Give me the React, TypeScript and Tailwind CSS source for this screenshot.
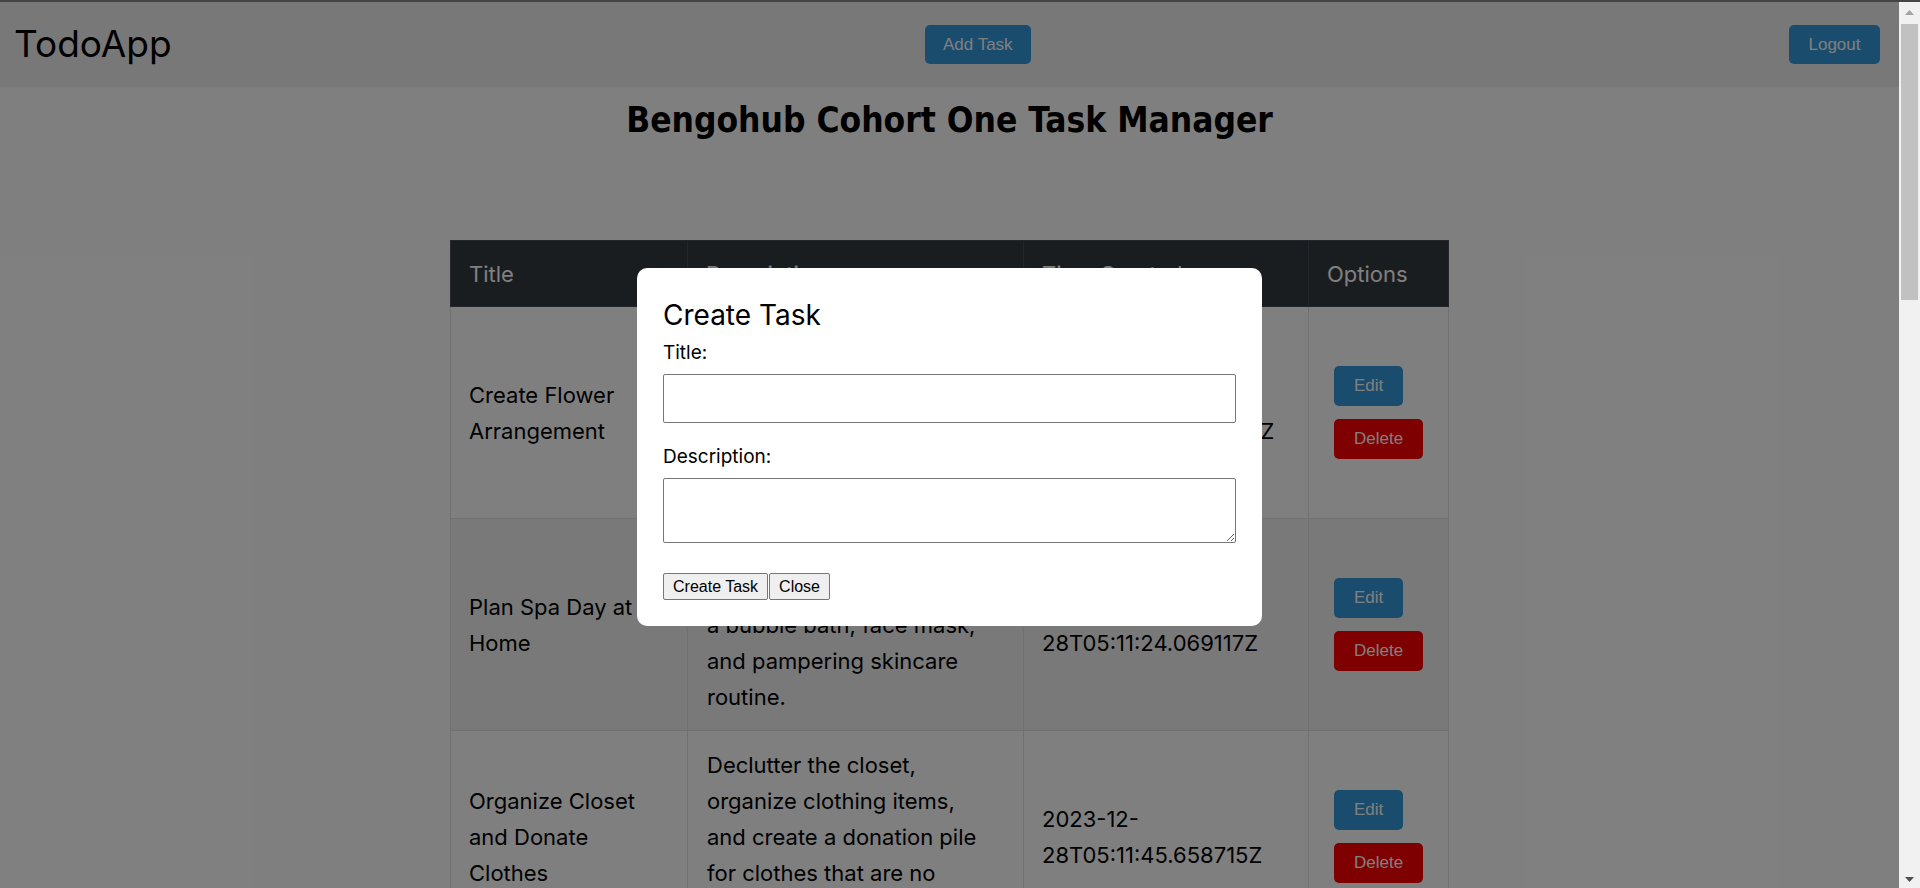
import React from "react";

type Row = { title: string; description: string; time: string; striped?: boolean };

const rows: Row[] = [
  {
    title: "Create Flower Arrangement",
    description:
      "Arrange fresh flowers in a beautiful vase to brighten up the living room and add a natural, cheerful touch to the home.",
    time: "2023-12-28T05:10:48.806542Z",
  },
  {
    title: "Plan Spa Day at Home",
    description:
      "Enjoy a relaxing day at home with treats including a bubble bath, face mask, and pampering skincare routine.",
    time: "2023-12-28T05:11:24.069117Z",
    striped: true,
  },
  {
    title: "Organize Closet and Donate Clothes",
    description:
      "Declutter the closet, organize clothing items, and create a donation pile for clothes that are no longer needed.",
    time: "2023-12-28T05:11:45.658715Z",
  },
];

function Scrollbar() {
  return (
    <div className="w-[21px] shrink-0 bg-[#f1f1f1] flex flex-col items-center">
      <div className="h-[20px] w-full flex items-center justify-center">
        <svg width="9" height="5" viewBox="0 0 9 5">
          <polygon points="0,5 9,5 4.5,0" fill="#a3a3a3" />
        </svg>
      </div>
      <div className="mt-[2px] h-[276px] w-[17px] bg-[#c1c1c1]" />
      <div className="flex-1" />
      <div className="h-[18px] w-full flex items-center justify-center">
        <svg width="9" height="5" viewBox="0 0 9 5">
          <polygon points="0,0 9,0 4.5,5" fill="#505050" />
        </svg>
      </div>
    </div>
  );
}

export default function App() {
  return (
    <div className="h-screen w-full flex flex-col overflow-hidden bg-white font-['Inter',sans-serif] text-black">
      <div className="h-[2px] shrink-0 bg-[#454545]" />
      <div className="flex flex-1 min-h-0">
        <div className="relative flex-1 min-w-0 overflow-hidden bg-white">
          <nav className="h-[85px] bg-[#f0f0f0] flex items-center justify-between pl-[14px] pr-[19px]">
            <span className="text-[37px] leading-[1.2]">TodoApp</span>
            <button className="h-[39px] px-[18px] rounded-[5px] bg-[#3498db] text-white text-[17px] font-['Liberation_Sans',Arial,sans-serif]">
              Add Task
            </button>
            <button className="ml-[5px] h-[39px] px-[19.5px] rounded-[5px] bg-[#3498db] text-white text-[17px] font-['Liberation_Sans',Arial,sans-serif]">
              Logout
            </button>
          </nav>

          <h1 className="mt-[13px] text-center text-[35px] leading-[40px] font-bold font-['Liberation_Sans_Narrow','DejaVu_Sans_Condensed','Arial_Narrow',sans-serif]">
            Bengohub Cohort One Task Manager
          </h1>

          <table className="mx-auto mt-[100px] w-[998px] table-fixed border-collapse text-[22px] leading-[36px]">
            <colgroup>
              <col className="w-[237px]" />
              <col className="w-[336px]" />
              <col className="w-[285px]" />
              <col className="w-[140px]" />
            </colgroup>
            <thead>
              <tr>
                {["Title", "Description", "Time Created", "Options"].map((h) => (
                  <th
                    key={h}
                    className="bg-[#343a40] text-white font-normal text-left px-[18px] py-[14.5px] border border-[#454d55]"
                  >
                    {h}
                  </th>
                ))}
              </tr>
            </thead>
            <tbody>
              {rows.map((r) => (
                <tr key={r.title} className={r.striped ? "bg-[#f2f2f2]" : "bg-white"}>
                  <td className="border border-[#dee2e6] px-[18px] py-[15.5px] align-middle">{r.title}</td>
                  <td className="border border-[#dee2e6] pl-[19px] pr-[30px] py-[15.5px] align-middle">
                    {r.description}
                  </td>
                  <td className="border border-[#dee2e6] px-[18px] py-[15.5px] align-middle">{r.time}</td>
                  <td className="border border-[#dee2e6] pl-[25px] pr-[10px] py-[15.5px] align-middle">
                    <div className="flex flex-col items-start gap-[13px]">
                      <button className="h-[40px] px-[20px] rounded-[5px] bg-[#3498db] text-white text-[17px] leading-[20px] font-['Liberation_Sans',Arial,sans-serif]">
                        Edit
                      </button>
                      <button className="h-[40px] px-[20px] rounded-[5px] bg-[#ff0000] text-white text-[17px] leading-[20px] font-['Liberation_Sans',Arial,sans-serif]">
                        Delete
                      </button>
                    </div>
                  </td>
                </tr>
              ))}
            </tbody>
          </table>

          <div className="absolute inset-0 bg-black/50 flex justify-center items-start">
            <div className="mt-[266px] w-[625px] bg-white rounded-[10px] px-[26px] pt-[30px] pb-[26px]">
              <h2 className="text-[28px] leading-[34px] font-normal">Create Task</h2>
              <label className="block mt-[9px] text-[19px] leading-[23px]">Title:</label>
              <input
                type="text"
                className="block mt-[10px] w-full h-[49px] border border-[#767676] rounded-[2px] bg-white"
              />
              <label className="block mt-[22px] text-[19px] leading-[23px]">Description:</label>
              <textarea className="block mt-[10px] w-full h-[65px] border border-[#767676] rounded-[2px] bg-white" />
              <div className="mt-[30px] flex gap-[1px]">
                <button className="h-[27px] px-[9px] bg-[#efefef] border border-[#767676] rounded-[2px] text-[16px] leading-none text-black font-['Liberation_Sans',Arial,sans-serif]">
                  Create Task
                </button>
                <button className="h-[27px] px-[9px] bg-[#efefef] border border-[#767676] rounded-[2px] text-[16px] leading-none text-black font-['Liberation_Sans',Arial,sans-serif]">
                  Close
                </button>
              </div>
            </div>
          </div>
        </div>
        <Scrollbar />
      </div>
    </div>
  );
}
